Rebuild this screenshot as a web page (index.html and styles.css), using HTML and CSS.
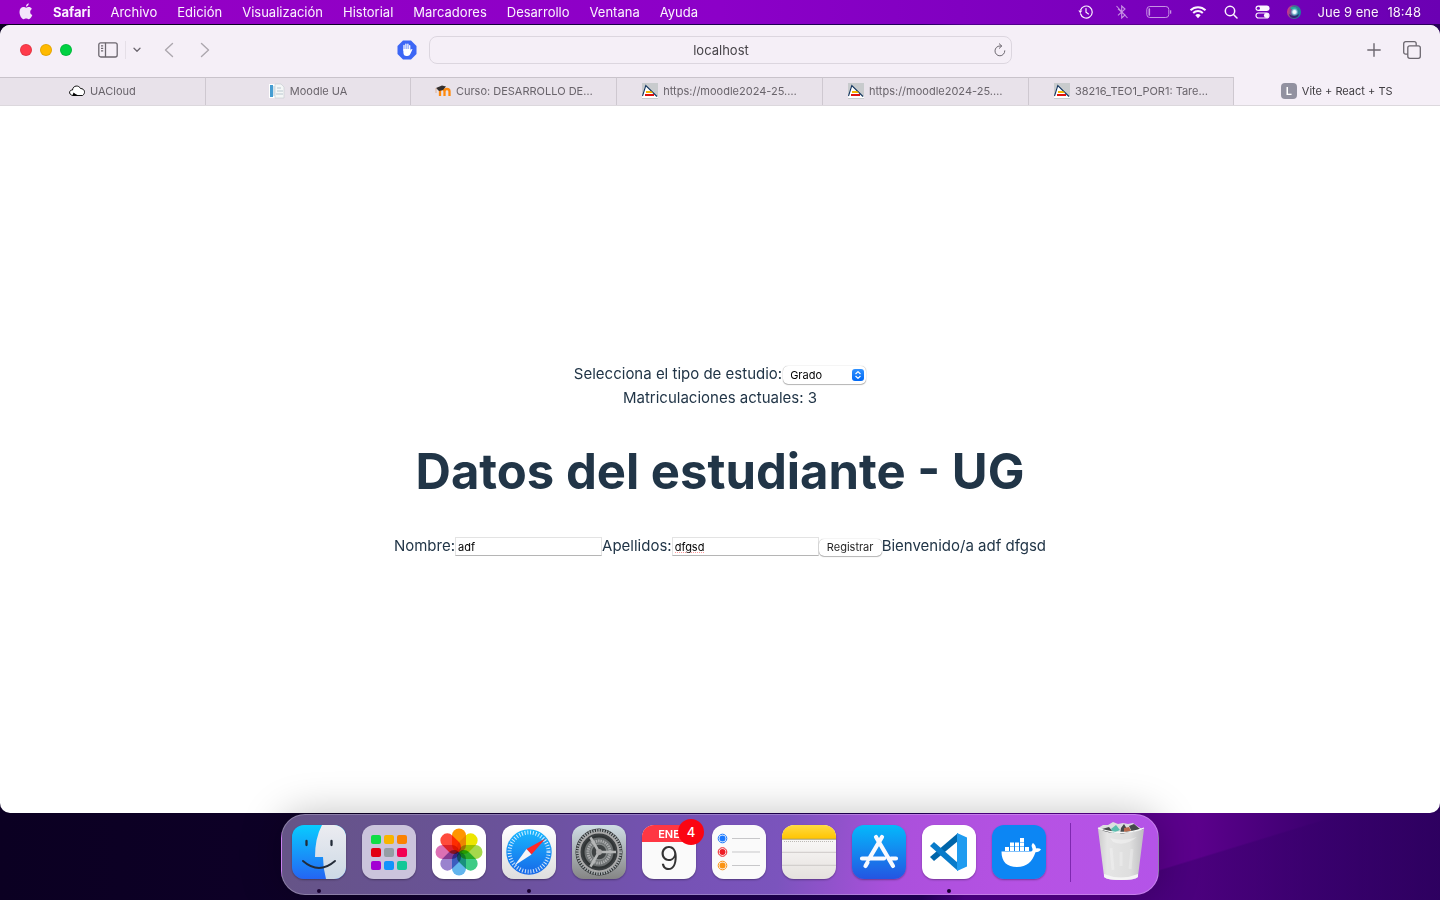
FILE: index.html
```html
<!DOCTYPE html>
<html lang="es">
<head>
<meta charset="utf-8">
<meta name="viewport" content="width=device-width, initial-scale=1">
<title>Vite + React + TS</title>
<link rel="stylesheet" href="styles.css">
</head>
<body class="desktop">
<header class="menubar">
  <nav class="menus" aria-label="Menú">
    <button class="menu apple" aria-label="Apple"><svg width="14" height="17" viewBox="0 0 14 17" fill="currentColor"><path d="M9.9 4.1c-1.2 0-1.9.7-2.7.7-.9 0-1.6-.7-2.7-.7C2.400 4.100.5 5.900.5 9c0 3.500 2.300 7.200 4.100 7.200.9 0 1.400-.6 2.600-.6s1.500.6 2.500.6c1.600 0 2.900-2.200 3.600-4.200-1.300-.6-2.100-1.600-2.100-3.100 0-1.300.7-2.300 1.700-2.900-.8-1.300-1.900-1.900-3-1.900zM9.700.3C8.100.5 6.900 2 7 3.700 8.600 3.600 9.900 2 9.700.3z"/></svg></button>
    <button class="menu app">Safari</button>
    <button class="menu">Archivo</button>
    <button class="menu">Edición</button>
    <button class="menu">Visualización</button>
    <button class="menu">Historial</button>
    <button class="menu">Marcadores</button>
    <button class="menu">Desarrollo</button>
    <button class="menu">Ventana</button>
    <button class="menu">Ayuda</button>
  </nav>
  <div class="status">
    <svg class="history" width="16" height="16" viewBox="0 0 16 16" fill="none" stroke="currentColor" stroke-width="1.200"><path d="M2.500 9.800A6 6 0 1 0 2.600 6M8 4.500V8.200l2.500 1.700" stroke-linecap="round"/><path d="M.3 6.500h4L2.300 9.300z" fill="currentColor" stroke="none"/></svg>
    <svg class="dim" width="14" height="16" viewBox="0 0 14 16" fill="none" stroke="currentColor" stroke-width="1.100"><path d="M3 4.800l7 6.200-3.300 3V2L10 5 3 11.300M1.500 2l11 12"/></svg>
    <svg class="dim battery" width="26" height="14" viewBox="0 0 26 14" fill="none" stroke="currentColor"><rect x=".8" y="1.500" width="22" height="11" rx="3"/><path d="M24.600 5.300v3.400" stroke-width="1.300"/><rect x="2.500" y="3.300" width="1.600" height="7.400" rx=".6" fill="#fff" stroke="none"/></svg>
    <svg width="18" height="14" viewBox="0 0 18 14" fill="none" stroke="currentColor" stroke-width="2"><path d="M1.500 5.200a10.700 10.700 0 0 1 15 0M4.200 8a6.900 6.900 0 0 1 9.600 0"/><path d="M9 13.200L6.300 10.300a3.900 3.900 0 0 1 5.400 0z" fill="currentColor" stroke="none"/></svg>
    <svg width="14" height="14" viewBox="0 0 14 14" fill="none" stroke="currentColor" stroke-width="1.500" stroke-linecap="round"><circle cx="6" cy="6" r="4.700"/><path d="M9.500 9.500l3.500 3.500"/></svg>
    <svg width="15" height="14" viewBox="0 0 15 14"><rect x=".5" y=".5" width="14" height="5.500" rx="2.750" fill="currentColor"/><circle cx="3.400" cy="3.250" r="1.600" fill="#7600bd"/><rect x="1" y="8" width="13" height="5" rx="2.500" fill="none" stroke="currentColor" stroke-width="1.200"/><circle cx="11.300" cy="10.500" r="2.400" fill="currentColor"/></svg>
    <svg width="14" height="14" viewBox="0 0 14 14"><defs><linearGradient id="siri" x1="0" y1=".4" x2="1" y2=".6"><stop offset="0" stop-color="#e13587"/><stop offset=".4" stop-color="#505f91"/><stop offset="1" stop-color="#148b9d"/></linearGradient><radialGradient id="siriGlow"><stop offset="0" stop-color="#fff"/><stop offset=".4" stop-color="#e6f6ff"/><stop offset="1" stop-color="#6fd0ec" stop-opacity="0"/></radialGradient></defs><circle cx="7" cy="7" r="7" fill="url(#siri)"/><path d="M2 9q5 4 10 0-1 4-5 4T2 9z" fill="#382474"/><path d="M3 3q4-3 8 1L7 6z" fill="#26aa9d"/><circle cx="7.500" cy="7" r="4" fill="url(#siriGlow)"/></svg>
    <time class="clock"><span>Jue 9 ene</span><span>18:48</span></time>
  </div>
</header>

<div class="window">
  <div class="toolbar">
    <div class="tools-left">
      <div class="lights">
        <button class="light red" aria-label="Cerrar"></button>
        <button class="light yellow" aria-label="Minimizar"></button>
        <button class="light green" aria-label="Ampliar"></button>
      </div>
      <button class="tool sidebar" aria-label="Barra lateral"><svg width="20" height="16" viewBox="0 0 20 16" fill="none" stroke="currentColor" stroke-width="1.300"><rect x=".8" y=".8" width="18.400" height="14.200" rx="2"/><path d="M7.500.8v14.200M3 3.800h2.200M3 6.300h2.200M3 8.800h2.200"/></svg></button>
      <button class="tool drop" aria-label="Grupos de pestañas"><svg width="8" height="6" viewBox="0 0 8 6" fill="none" stroke="currentColor" stroke-width="1.300" stroke-linecap="round" stroke-linejoin="round"><path d="M1 1.300l3 3 3-3"/></svg></button>
      <button class="tool pale back" aria-label="Atrás"><svg width="10" height="16" viewBox="0 0 10 16" fill="none" stroke="currentColor" stroke-width="1.400" stroke-linecap="round" stroke-linejoin="round"><path d="M8.500 1.500L1.500 8l7 6.500"/></svg></button>
      <button class="tool pale" aria-label="Adelante"><svg width="10" height="16" viewBox="0 0 10 16" fill="none" stroke="currentColor" stroke-width="1.400" stroke-linecap="round" stroke-linejoin="round"><path d="M1.500 1.500l7 6.500-7 6.500"/></svg></button>
      <button class="tool blocker" aria-label="Bloqueador"><svg width="20" height="20" viewBox="0 0 20 20"><path d="M6 .5h8L19.500 6v8L14 19.500H6L.5 14V6z" fill="#3c66f5"/><path d="M7 10.500V5.500M8.900 9V4.200M10.900 9V4.200M12.700 10V5.700" stroke="#fff" stroke-width="1.300" stroke-linecap="round"/><path d="M6.400 9h7v1.500l1-1.200c.5-.6 1.200-.2.9.5l-2 4.200c-.5 1.300-1.500 2-3 2h-.8c-2 0-3.100-1.300-3.100-3.300z" fill="#fff"/></svg></button>
    </div>
    <div class="address">
      <input class="url" type="text" value="localhost" aria-label="Dirección">
      <button class="tool reload" aria-label="Recargar"><svg width="12" height="14" viewBox="0 0 12 14" fill="none" stroke="currentColor" stroke-width="1" stroke-linecap="round" stroke-linejoin="round"><path d="M10.800 7.800A4.900 4.900 0 1 1 6 3h1.500M5.300.8L7.700 3 5.300 5.300"/></svg></button>
    </div>
    <div class="tools-right">
      <button class="tool" aria-label="Nueva pestaña"><svg width="14" height="14" viewBox="0 0 14 14" stroke="currentColor" stroke-width="1.400" stroke-linecap="round"><path d="M7 .8v12.400M.8 7h12.400"/></svg></button>
      <button class="tool" aria-label="Vista de pestañas"><svg width="18" height="18" viewBox="0 0 18 18" fill="none" stroke="currentColor" stroke-width="1.300"><rect x="4.800" y="4.800" width="12.500" height="12.500" rx="2"/><path d="M4.800 13.200H2.700a2 2 0 0 1-2-2V2.700a2 2 0 0 1 2-2h8.500a2 2 0 0 1 2 2v2.100"/></svg></button>
    </div>
  </div>
  <nav class="tabs" aria-label="Pestañas">
    <button class="tab"><svg class="fav" viewBox="0 0 16 16"><path d="M4 12.500C-.5 12-.5 7 3.500 7 4 2 10 2 11.500 5.500c4.500 0 5.300 5 2 7z" fill="#fff" stroke="#111"/><path d="M3.500 12.500l1-3 2 1.500 3 1.500z"/></svg><span>UACloud</span></button>
    <button class="tab"><svg class="fav" viewBox="0 0 16 16"><path d="M0 1h10v14H0z" fill="#fff"/><path d="M1 2h3v12H1z" fill="#459dd2"/><path d="M4 3h3v10H4z" fill="#d5e3eb"/><path d="M6 1h6l3 3v11H6z" fill="#f5f7f7" stroke="#c8cfd2" stroke-width=".7"/><path d="M8 5h4M8 8h6M7 11h7" stroke="#b9c7cf"/></svg><span>Moodle UA</span></button>
    <button class="tab"><svg class="fav" viewBox="0 0 16 16"><path d="M5 13V8.500Q5 6 7.200 6t2.300 2.500V13M9.500 13V8.500Q9.500 6 12 6t2.500 2.500V13" fill="none" stroke="#ff8a0d" stroke-width="2.300"/><path d="M1 5l6-2.500 4 1-3 3.500-4 1z" fill="#34302f"/><path d="M1 5v5" stroke="#dba07a" stroke-width=".7"/></svg><span>Curso: DESARROLLO DE…</span></button>
    <button class="tab"><svg class="fav" viewBox="0 0 16 16"><path d="M0 0h16v16H0z" fill="#c8cbcd"/><path d="M0 14L3.500 2 16 14z" fill="#fff"/><path d="M.5 13L3.800 2.500 15 13.500" fill="none" stroke="#12345e" stroke-width="1.100"/><path d="M4 8h5l2 2H4z" fill="#f5b800"/><path d="M3 11h9v2H3z" fill="#dd1210"/><path d="M0 14h16v1H0z" fill="#fff"/></svg><span>https://moodle2024-25.…</span></button>
    <button class="tab"><svg class="fav" viewBox="0 0 16 16"><path d="M0 0h16v16H0z" fill="#c8cbcd"/><path d="M0 14L3.500 2 16 14z" fill="#fff"/><path d="M.5 13L3.800 2.500 15 13.500" fill="none" stroke="#12345e" stroke-width="1.100"/><path d="M4 8h5l2 2H4z" fill="#f5b800"/><path d="M3 11h9v2H3z" fill="#dd1210"/><path d="M0 14h16v1H0z" fill="#fff"/></svg><span>https://moodle2024-25.…</span></button>
    <button class="tab"><svg class="fav" viewBox="0 0 16 16"><path d="M0 0h16v16H0z" fill="#c8cbcd"/><path d="M0 14L3.500 2 16 14z" fill="#fff"/><path d="M.5 13L3.800 2.500 15 13.500" fill="none" stroke="#12345e" stroke-width="1.100"/><path d="M4 8h5l2 2H4z" fill="#f5b800"/><path d="M3 11h9v2H3z" fill="#dd1210"/><path d="M0 14h16v1H0z" fill="#fff"/></svg><span>38216_TEO1_POR1: Tare…</span></button>
    <button class="tab active"><span class="fav letter">L</span><span>Vite + React + TS</span></button>
  </nav>
  <main class="page">
    <div class="line">
      <label for="tipo">Selecciona el tipo de estudio:</label>
      <span class="picker">
        <select id="tipo"><option>Grado</option></select>
        <svg class="arrows" width="12" height="12" viewBox="0 0 12 12"><defs><linearGradient id="blue" x2="0" y2="1"><stop stop-color="#2f91ff"/><stop offset="1" stop-color="#0068f5"/></linearGradient></defs><rect width="12" height="12" rx="3" fill="url(#blue)"/><path d="M3.800 4.700L6 2.600l2.200 2.100M3.800 7.300L6 9.400l2.200-2.100" fill="none" stroke="#fff" stroke-width="1.200" stroke-linecap="round" stroke-linejoin="round"/></svg>
      </span>
    </div>
    <div class="line">Matriculaciones actuales: 3</div>
    <h1 class="title">Datos del estudiante - UG</h1>
    <form class="line">
      <label for="nombre">Nombre:</label><input class="field" id="nombre" type="text" value="adf">
      <label for="apellidos">Apellidos:</label><input class="field misspelt" id="apellidos" type="text" value="dfgsd">
      <button class="submit" type="button">Registrar</button>
      <span>Bienvenido/a adf dfgsd</span>
    </form>
  </main>
</div>

<footer class="dock-area">
  <nav class="dock" aria-label="Dock">
    <button class="icon running" aria-label="Finder"><svg viewBox="0 0 54 54"><defs><linearGradient id="fa" x2="0" y2="1"><stop stop-color="#08ccff"/><stop offset="1" stop-color="#2465f3"/></linearGradient><linearGradient id="fb" x2="0" y2="1"><stop stop-color="#ececf1"/><stop offset="1" stop-color="#ccd9e5"/></linearGradient></defs><rect width="54" height="54" rx="12" fill="url(#fa)"/><path d="M30 0h12a12 12 0 0 1 12 12v30a12 12 0 0 1-12 12h-8q-3-11-3-22h-8Q23 13 30 0z" fill="url(#fb)"/><path d="M14.500 16v4M39.500 16v4" stroke="#222b38" stroke-width="2.300" stroke-linecap="round"/><path d="M11 36q16 14 32 0" fill="none" stroke="#222b38" stroke-width="1.900" stroke-linecap="round"/></svg></button>
    <button class="icon" aria-label="Launchpad"><svg viewBox="0 0 54 54"><rect width="54" height="54" rx="12" fill="#cbc4dc"/><g><rect x="9" y="10" width="10" height="9" rx="2" fill="#10dd46"/><rect x="22" y="10" width="10" height="9" rx="2" fill="#f8b400"/><rect x="35" y="10" width="10" height="9" rx="2" fill="#fb8202"/><rect x="9" y="23" width="10" height="9" rx="2" fill="#e20012"/><rect x="22" y="23" width="10" height="9" rx="2" fill="#959da4"/><rect x="35" y="23" width="10" height="9" rx="2" fill="#f30052"/><rect x="9" y="36" width="10" height="9" rx="2" fill="#a300d3"/><rect x="22" y="36" width="10" height="9" rx="2" fill="#1292fb"/><rect x="35" y="36" width="10" height="9" rx="2" fill="#13c797"/></g></svg></button>
    <button class="icon" aria-label="Fotos"><svg viewBox="0 0 54 54"><rect width="54" height="54" rx="12" fill="#fff"/><g class="petals"><rect x="20" y="3.500" width="14" height="23.500" rx="7" fill="#ff9500"/><rect x="20" y="3.500" width="14" height="23.500" rx="7" fill="#ede500" transform="rotate(45 27 27)"/><rect x="20" y="3.500" width="14" height="23.500" rx="7" fill="#a5d84b" transform="rotate(90 27 27)"/><rect x="20" y="3.500" width="14" height="23.500" rx="7" fill="#3dcb85" transform="rotate(135 27 27)"/><rect x="20" y="3.500" width="14" height="23.500" rx="7" fill="#62b5ed" transform="rotate(180 27 27)"/><rect x="20" y="3.500" width="14" height="23.500" rx="7" fill="#9a83ce" transform="rotate(225 27 27)"/><rect x="20" y="3.500" width="14" height="23.500" rx="7" fill="#dc70b4" transform="rotate(270 27 27)"/><rect x="20" y="3.500" width="14" height="23.500" rx="7" fill="#ff4b3c" transform="rotate(315 27 27)"/></g></svg></button>
    <button class="icon running" aria-label="Safari"><svg viewBox="0 0 54 54"><defs><linearGradient id="wh" x2="0" y2="1"><stop stop-color="#fff"/><stop offset="1" stop-color="#dedede"/></linearGradient><linearGradient id="sa" x2="0" y2="1"><stop stop-color="#18b8ff"/><stop offset="1" stop-color="#1768e8"/></linearGradient></defs><rect width="54" height="54" rx="12" fill="url(#wh)"/><circle cx="27" cy="27" r="22.700" fill="url(#sa)"/><circle cx="27" cy="27" r="19.500" fill="none" stroke="#fff" stroke-opacity=".8" stroke-width="4" stroke-dasharray="1 1.800"/><path d="M43.500 13.500L29.500 29.500 24.500 24z" fill="#ff2828"/><path d="M24.500 24l5 5.500-17 11z" fill="#f5f5f7"/></svg></button>
    <button class="icon" aria-label="Ajustes"><svg viewBox="0 0 54 54"><defs><linearGradient id="se" x2="0" y2="1"><stop stop-color="#cfdde4"/><stop offset="1" stop-color="#858585"/></linearGradient></defs><rect width="54" height="54" rx="12" fill="url(#se)"/><circle cx="27" cy="27" r="23.500" fill="#292c2d"/><circle cx="27" cy="27" r="21.500" fill="none" stroke="#a4aaad" stroke-width="3" stroke-dasharray="1.500 1"/><circle cx="27" cy="27" r="19.500" fill="#3c4042" stroke="#aaa" stroke-width="2"/><circle cx="27" cy="27" r="15.500" fill="#6c7071" stroke="#303435" stroke-width="2"/><circle cx="27" cy="27" r="11" fill="none" stroke="#a9abac" stroke-width="3" stroke-dasharray="1.500 .8"/><circle cx="27" cy="27" r="8" fill="#3f4344" stroke="#858989" stroke-width="1.500"/><path d="M27 27h17M27 27l-8.500-14.700M27 27l-8.500 14.700" stroke="#b5b7b7" stroke-width="2.600"/><circle cx="27" cy="27" r="3" fill="#aaa"/></svg></button>
    <button class="icon calendar" aria-label="Calendario"><span class="month">ENE</span><span class="day">9</span><span class="badge">4</span></button>
    <button class="icon" aria-label="Recordatorios"><svg viewBox="0 0 54 54"><rect width="54" height="54" rx="12" fill="#fafafa"/><g fill="none" stroke-width="1"><circle cx="10.500" cy="13.500" r="4.300" stroke="#1979ff"/><circle cx="10.500" cy="27" r="4.300" stroke="#ef1c25"/><circle cx="10.500" cy="40.500" r="4.300" stroke="#fa9312"/></g><circle cx="10.500" cy="13.500" r="3" fill="#1979ff"/><circle cx="10.500" cy="27" r="3" fill="#ef1c25"/><circle cx="10.500" cy="40.500" r="3" fill="#fa9312"/><path d="M20 13.500h28M20 27h28M20 40.500h28" stroke="#c7c7c9"/></svg></button>
    <button class="icon" aria-label="Notas"><svg viewBox="0 0 54 54"><defs><linearGradient id="no" x2="0" y2="1"><stop stop-color="#fff"/><stop offset="1" stop-color="#e5e1de"/></linearGradient><linearGradient id="nt" x2="0" y2="1"><stop stop-color="#ffdb42"/><stop offset="1" stop-color="#ffc400"/></linearGradient></defs><rect width="54" height="54" rx="12" fill="url(#no)"/><path d="M0 14v-2A12 12 0 0 1 12 0h30a12 12 0 0 1 12 12v2z" fill="url(#nt)"/><path d="M0 14.200h54" stroke="#a3996d"/><path d="M2 16.500h50" stroke="#bcb9b5" stroke-dasharray="1 1"/><path d="M0 27.300h54M0 40.300h54" stroke="#ccc9c7"/></svg></button>
    <button class="icon" aria-label="App Store"><svg viewBox="0 0 54 54"><defs><linearGradient id="as" x2="0" y2="1"><stop stop-color="#04b9fb"/><stop offset="1" stop-color="#2455e2"/></linearGradient></defs><rect width="54" height="54" rx="12" fill="url(#as)"/><path d="M30 12L17 34M24 12l17 29M10 33.500h22M39 33.500h5M15.500 37.500l-2 3.500" fill="none" stroke="#f8faff" stroke-width="4.200" stroke-linecap="round"/></svg></button>
    <button class="icon running" aria-label="Visual Studio Code"><svg viewBox="0 0 54 54"><rect width="54" height="54" rx="12" fill="#fff"/><path d="M8 32l4 4 24-20V8z" fill="#0065a9"/><path d="M8 21l4-4 24 21v8z" fill="#087bca"/><path d="M35 8l10 4.500v29L35 46z" fill="#1f9cf0"/></svg></button>
    <button class="icon" aria-label="Docker"><svg viewBox="0 0 54 54"><rect width="54" height="54" rx="12" fill="#0c86f4"/><path d="M9.500 26.500H38c3 0 3-2 2-4-1-2 0-3.500 1-4.500 2 1.500 3 3.500 3 5.500 1.500-.5 3.500-.3 5 .8-1 2-3 3-5.500 3C40 37 35 42 25 42S9.500 37 9.500 26.500z" fill="#fff"/><path d="M13 22h4v4h-4zM18 22h4v4h-4zM23 22h4v4h-4zM28 22h4v4h-4zM33 22h4v4h-4zM18 17.500h4v4h-4zM23 17.500h4v4h-4zM28 17.500h4v4h-4zM28 13h4v4h-4z" fill="#fff"/></svg></button>
    <span class="separator"></span>
    <button class="icon trash" aria-label="Papelera"><svg viewBox="0 0 54 64"><defs><linearGradient id="tr"><stop stop-color="#ccc"/><stop offset=".2" stop-color="#e5e5e5"/><stop offset=".7" stop-color="#dedede"/><stop offset="1" stop-color="#bdbdc0"/></linearGradient></defs><path d="M4 8L9 5l5 0 5-3 5 2 5-1 5 1 5-1 4 3 5 3-3 6H7z" fill="#dcdfdf"/><path d="M8 9l7-2 4 5-9 2zM27 8l3-4 3 5 5 2-12 4zM35 6l5-2 6 5-8 3z" fill="#45494a"/><path d="M17 9l5-4 4 5-7 3z" fill="#59bdae"/><path d="M30 8l5-1 2 4-7 1z" fill="#b86a4d"/><path d="M4 9q23 9 46 0l-6 47q0 4-17 4T10 56z" fill="url(#tr)"/><path d="M4 8q23 9 46 0" fill="none" stroke="#f8f8f8" stroke-width="1.300"/><path d="M16 18q14 4 27-1-12 10-24 5" fill="#fff" fill-opacity=".35"/><path d="M17 28l2 22M38 29l-2 20M27 32v14" fill="none" stroke="#fff" stroke-opacity=".25" stroke-width="3"/><path d="M10 54q17 7 34 0v3q-3 3-17 3T10 57z" fill="#f5f5f5"/></svg></button>
  </nav>
</footer>
</body>
</html>
```

FILE: styles.css
```css
* { box-sizing: border-box; }
button, input, select { font: inherit; color: inherit; }
button { padding: 0; border: 0; background: none; }
svg { display: block; flex: none; }

.desktop {
  margin: 0;
  min-height: 100vh;
  display: flex;
  flex-direction: column;
  overflow: hidden;
  font-family: Inter, "Liberation Sans", sans-serif;
  background:
    linear-gradient(90deg, #9600c4, #8c00c8 50%, #6b00b3) 0 0 / 100% 24px no-repeat,
    linear-gradient(163deg, #35006a00 39%, #35006a70 40%) 100% 100% / 340px 87px no-repeat,
    linear-gradient(90deg, #0b0022, #0e0028 25%, #1c004c 45%, #22005a 64%, #50008c 67%, #5c008c 83%, #3a006e 92%, #280058);
}

.menubar {
  display: flex;
  justify-content: space-between;
  height: 25px;
  padding: 0 19px 2px;
  color: #fbf4fe;
  font-size: 13px;
  font-weight: 400;
  white-space: nowrap;
  text-shadow: 0 1px 2px #40006066;
}
.menus, .status { display: flex; align-items: center; }
.menus { gap: 20px; }
.apple { color: #f3e4fa; }
.app { font-weight: 700; }
.status { gap: 17px; }
.history { margin-right: 4px; }
.dim { opacity: .6; }
.clock { display: flex; gap: 9px; }

.window {
  flex: 1;
  display: flex;
  flex-direction: column;
  border-radius: 10px;
  overflow: hidden;
  background: #fff;
}
.toolbar {
  display: grid;
  grid-template-columns: minmax(0, 1fr) minmax(0, 583px) minmax(0, 1fr);
  align-items: center;
  height: 52px;
  padding-bottom: 2px;
  background: #f5eff7;
  color: #6c676f;
}
.tools-left, .tools-right, .lights { display: flex; align-items: center; }
.tools-left { padding: 0 12px 0 20px; }
.tools-right { justify-content: flex-end; gap: 22px; padding-right: 19px; }
.lights { gap: 8px; margin-right: 26px; }
.light { width: 12px; height: 12px; border-radius: 50%; border: 1px solid #0000001a; }
.red { background: #ff3b4b; }
.yellow { background: #ffba00; }
.green { background: #00d142; }
.drop { margin-left: 7px; padding: 6px 0 6px 7px; border-left: 1px solid #e5dfe7; }
.pale { color: #aca7ae; }
.back { margin: 0 26px 0 23px; }
.blocker { margin-left: auto; }
.address {
  display: flex;
  align-items: center;
  height: 28px;
  padding: 0 5px 0 19px;
  border: 1px solid #dcd6df;
  border-radius: 8px;
}
.url {
  flex: 1;
  min-width: 0;
  padding: 0;
  border: 0;
  outline: 0;
  background: none;
  color: #474449;
  font-size: 13px;
  text-align: center;
}

.tabs {
  display: flex;
  height: 29px;
  background: #e8e2ea;
  border-bottom: 1px solid #dcd8dd;
  color: #69646b;
  font-size: 11px;
}
.tab {
  flex: 1;
  min-width: 0;
  display: flex;
  align-items: center;
  justify-content: center;
  gap: 5px;
  padding-bottom: 2px;
  border-top: 1px solid #c9c3cb;
  border-right: 1px solid #cec8d0;
  white-space: nowrap;
}
.active { background: #f5eff7; border-color: #f5eff7; color: #3f3c41; }
.fav { width: 16px; height: 16px; }
.letter { border-radius: 4px; background: #9291a0; color: #fff; font-weight: 600; line-height: 17px; }

.page {
  flex: 1;
  display: flex;
  flex-direction: column;
  justify-content: center;
  color: #213547;
  font-size: 15px;
  line-height: 24px;
}
.line { display: flex; justify-content: center; align-items: baseline; height: 24px; }
.title { margin: 34px 0; font-size: 49px; line-height: 56px; font-weight: 700; text-align: center; }
.picker { position: relative; margin-left: 1px; }
.picker select {
  display: block;
  appearance: none;
  width: 83px;
  height: 18px;
  padding: 0 7px;
  border: 0;
  border-radius: 5px;
  background: #fff;
  box-shadow: 0 0 1px #0006, 0 1px 1px #0004;
  color: #000;
  font-size: 11px;
  line-height: 18px;
}
.arrows { position: absolute; right: 2px; top: 3px; pointer-events: none; }
.field {
  width: 147px;
  height: 19px;
  padding: 1px 2px;
  border: 1px solid #e3e3e3;
  border-bottom-color: #b5b5b5;
  border-radius: 0;
  outline: 0;
  background: #fff;
  color: #000;
  font-size: 11px;
}
.misspelt { background: repeating-linear-gradient(90deg, #ff9a9a 0 1px, #fff 1px 2px) 2px 14px / 30px 1px no-repeat; }
.submit {
  width: 63px;
  height: 17px;
  border-radius: 5px;
  box-shadow: 0 0 1px #0006, 0 1px 1px #0004;
  color: #262626;
  font-size: 11px;
  line-height: 17px;
}

.dock-area { display: flex; justify-content: center; padding: 1px 0 5px; }
.dock {
  position: relative;
  display: flex;
  align-items: center;
  gap: 16px;
  height: 81px;
  padding: 0 10px 5px;
  border: 1px solid #ffffff40;
  border-radius: 24px;
  background: linear-gradient(100deg, #655486, #6a529a 25%, #7552b4 45%, #7b54bd 57%, #ab50dc 70%, #b652e4 85%, #b454e8);
  box-shadow: 0 0 40px #00000040;
}
.icon { position: relative; width: 54px; height: 54px; border-radius: 12px; box-shadow: 0 1px 2px #0005; }
.running::after {
  content: "";
  position: absolute;
  left: 25px;
  top: 64px;
  width: 4px;
  height: 4px;
  border-radius: 2px;
  background: #180030;
}
.petals rect { mix-blend-mode: multiply; }
.calendar { display: flex; flex-direction: column; background: #fafafa; }
.month {
  align-self: stretch;
  height: 17px;
  border-radius: 12px 12px 0 0;
  background: #ff3743;
  color: #fff;
  font-size: 11px;
  font-weight: 600;
  line-height: 18px;
}
.day { align-self: stretch; color: #333; font-size: 32px; font-weight: 300; line-height: 34px; }
.badge {
  position: absolute;
  top: -6px;
  right: -8px;
  width: 26px;
  height: 26px;
  border-radius: 50%;
  background: #fb0512;
  color: #fff;
  font-size: 13px;
  font-weight: 500;
  line-height: 26px;
}
.separator { width: 1px; height: 59px; margin: 0 7px 0 8px; background: #7e28b0; }
.trash { height: 64px; box-shadow: none; }
```
